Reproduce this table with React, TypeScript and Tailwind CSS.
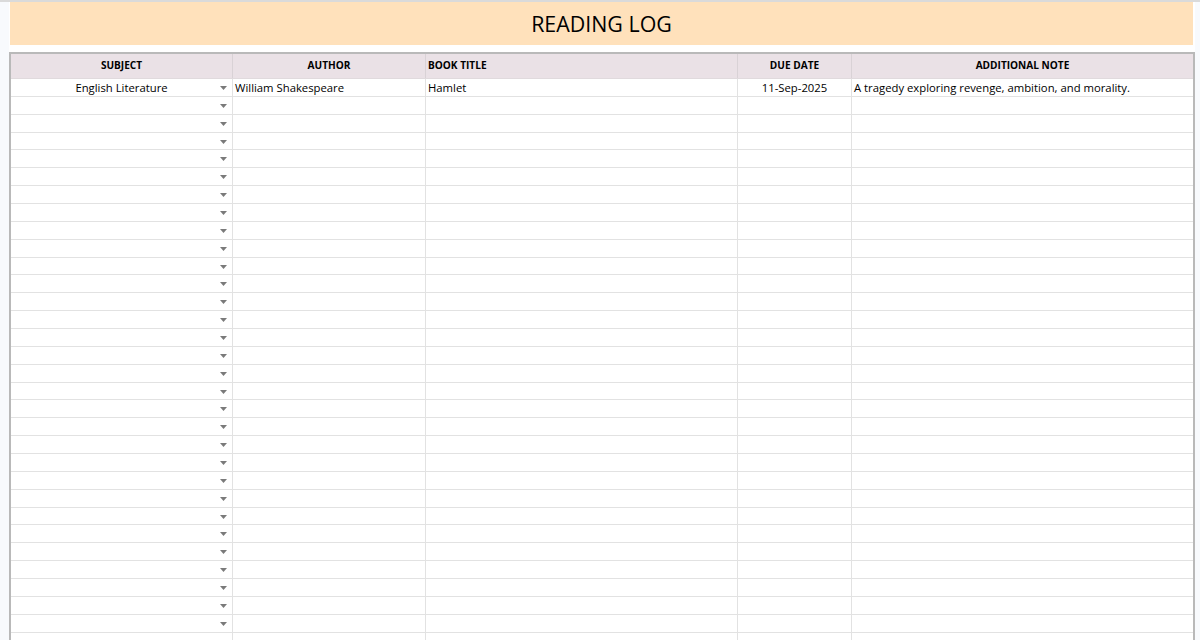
import React from 'react';

const cols = [
  { key: 'subject', label: 'SUBJECT', w: 'w-[222px]', head: 'justify-center', cell: 'justify-center' },
  { key: 'author', label: 'AUTHOR', w: 'w-[193px]', head: 'justify-center', cell: 'justify-start pl-[2px]' },
  { key: 'title', label: 'BOOK TITLE', w: 'w-[312px]', head: 'justify-start pl-[2px]', cell: 'justify-start pl-[2px]' },
  { key: 'due', label: 'DUE DATE', w: 'w-[114px]', head: 'justify-center', cell: 'justify-center' },
  { key: 'note', label: 'ADDITIONAL NOTE', w: 'flex-1', head: 'justify-center', cell: 'justify-start pl-[2px]' },
];

const rows: Record<string, string>[] = [
  {
    subject: 'English Literature',
    author: 'William Shakespeare',
    title: 'Hamlet',
    due: '11-Sep-2025',
    note: 'A tragedy exploring revenge, ambition, and morality.',
  },
  ...Array.from({ length: 31 }, () => ({})),
];

function Caret() {
  return (
    <svg width="7" height="4" viewBox="0 0 7 4" className="absolute right-[5px] top-[7px]">
      <path d="M0 0 H7 L3.5 4 Z" fill="#7a7a7a" />
    </svg>
  );
}

export default function App() {
  return (
    <div
      className="w-[1200px] h-[640px] overflow-hidden bg-white flex text-black"
      style={{ fontFamily: '"Open Sans", "Liberation Sans", sans-serif' }}
    >
      {/* row header gutter */}
      <div className="w-[9px] shrink-0 bg-[#f8fafd] border-t-2 border-[#dadada]" />

      <div className="w-[1186px] shrink-0 flex flex-col min-h-0">
        <div className="h-[2px] shrink-0 bg-[#dadada]" />
        <div className="h-[43px] shrink-0 bg-[#ffe1bb] ml-px mr-[2px] flex items-center justify-center text-[21.4px] leading-none">
          READING LOG
        </div>
        <div className="h-[7px] shrink-0" />

        <div className="shrink-0 border-l-2 border-t-2 border-r-2 border-[#b9b9b9] flex flex-col">
          <div className="h-[25px] shrink-0 flex bg-[#eae1e6] border-b border-[#e0dadd]">
            {cols.map((c, i) => (
              <div
                key={c.key}
                className={`${c.w} shrink-0 flex items-center ${c.head} text-[10.1px] font-bold ${
                  i < cols.length - 1 ? 'border-r border-[#d9d2d6]' : ''
                }`}
              >
                {c.label}
              </div>
            ))}
          </div>

          {rows.map((r, ri) => (
            <div key={ri} className="h-[17.87px] shrink-0 flex border-b border-[#e2e2e2]">
              {cols.map((c, i) => (
                <div
                  key={c.key}
                  className={`${c.w} shrink-0 relative flex items-center ${c.cell} text-[11.3px] leading-none whitespace-nowrap ${
                    i < cols.length - 1 ? 'border-r border-[#e2e2e2]' : ''
                  }`}
                >
                  {r[c.key] ?? ''}
                  {i === 0 && <Caret />}
                </div>
              ))}
            </div>
          ))}
        </div>
      </div>

      <div className="flex-1 bg-[#f8fafd] border-t-2 border-[#dadada]" />
    </div>
  );
}
